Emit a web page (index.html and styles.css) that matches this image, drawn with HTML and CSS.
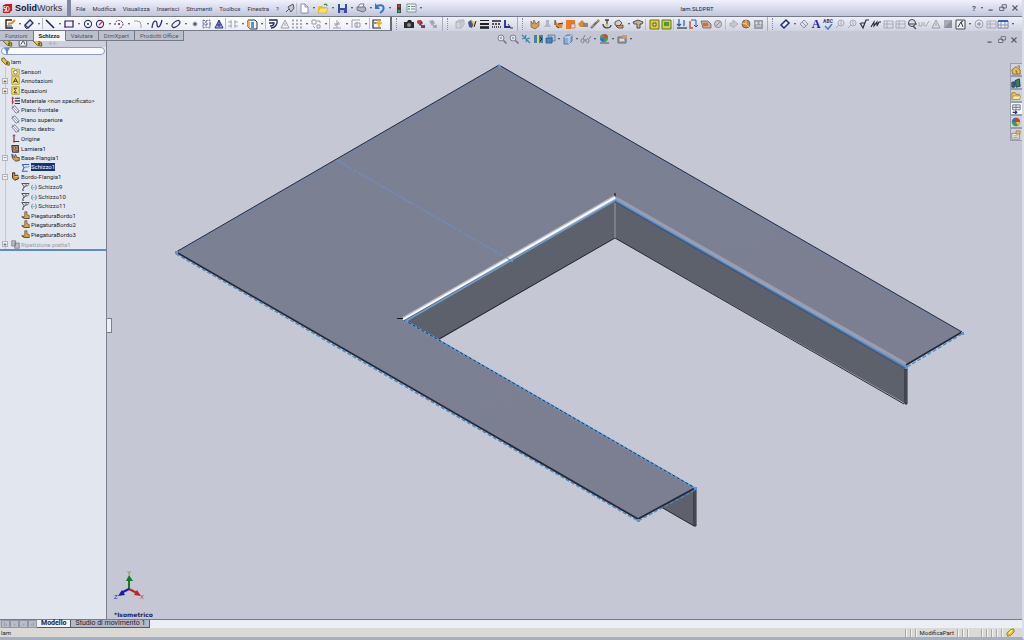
FILE: index.html
```
<!DOCTYPE html>
<html lang="it">
<head>
    <meta charset="UTF-8">
    <meta name="viewport" content="width=device-width, initial-scale=1.0">
    <title>lam.SLDPRT - SolidWorks</title>
    <link rel="stylesheet" href="styles.css">
</head>
<body>

    <!-- Icon sprite -->
    <svg class="sprite" aria-hidden="true">
        <symbol id="i-sketch" viewBox="0 0 12 12"><path d="M8 2H2v8h7" fill="none" stroke="#223" stroke-width="1.4"/><path d="M4 6l4-1 3-3" fill="none" stroke="#e0921c" stroke-width="2"/><path d="M3 8h5" stroke="#24a" /></symbol>
        <symbol id="i-dim" viewBox="0 0 12 12"><path d="M2 7l5-5 3 3-5 5z" fill="#dfe4f5" stroke="#23306e" stroke-width="1.3"/><path d="M2 7v2l2 2" stroke="#23306e" fill="none"/></symbol>
        <symbol id="i-line" viewBox="0 0 12 12"><path d="M2 2l8 8" stroke="#191a78" stroke-width="1.6"/></symbol>
        <symbol id="i-rect" viewBox="0 0 12 12"><path d="M2 3h8v6H2z" fill="#f4f5fc" stroke="#191a78" stroke-width="1.2"/><path d="M1 9h2M9 3h2" stroke="#b33"/></symbol>
        <symbol id="i-circle" viewBox="0 0 12 12"><circle cx="6" cy="6" r="3.6" fill="none" stroke="#2b2f86" stroke-width="1.1"/><path d="M6 5v2M5 6h2" stroke="#2b2f86"/></symbol>
        <symbol id="i-circle2" viewBox="0 0 12 12"><circle cx="6" cy="6" r="3.6" fill="none" stroke="#2b2f86" stroke-width="1.1"/><path d="M5 7l4-4" stroke="#c33" stroke-width="1.2"/></symbol>
        <symbol id="i-arc3" viewBox="0 0 12 12"><path d="M2 7a4 4 0 0 1 8-1a4 4 0 0 1-4 4" fill="none" stroke="#2b2f86" stroke-dasharray="2 1"/><path d="M5 5h2v2H5z" fill="#b44"/></symbol>
        <symbol id="i-fillet" viewBox="0 0 12 12"><path d="M2 3h3a4 4 0 0 1 4 4v3" fill="none" stroke="#9a9eae"/></symbol>
        <symbol id="i-spline" viewBox="0 0 12 12"><path d="M1 10C2 1 6 2 6 6s3 5 5-4" fill="none" stroke="#2a2f90" stroke-width="1.3"/></symbol>
        <symbol id="i-ellipse" viewBox="0 0 12 12"><ellipse cx="6" cy="6" rx="4.6" ry="2.4" transform="rotate(-38 6 6)" fill="none" stroke="#34386f" stroke-width="1.2"/></symbol>
        <symbol id="i-point" viewBox="0 0 12 12"><path d="M6 3.500v5M3.500 6h5M4.500 4.500l3 3M7.500 4.500l-3 3" stroke="#34386f" stroke-width=".8"/></symbol>
        <symbol id="i-plane" viewBox="0 0 12 12"><path d="M2 2l3 1 4-1v8l-4-1-3 1zM2 6h8M5 3v6" fill="none" stroke="#566096" stroke-dasharray="2 1"/></symbol>
        <symbol id="i-text" viewBox="0 0 12 12"><path d="M6 2l4 8H2zM4 7h4M6 3v6" fill="#aab0d6" stroke="#2c3384"/></symbol>
        <symbol id="i-trim" viewBox="0 0 12 12"><path d="M1 4h4M7 4h4M1 8h4M7 8h4M4 2v8M8 2v8" stroke="#a6a9b8"/></symbol>
        <symbol id="i-cube" viewBox="0 0 12 12"><path d="M2 2h7l2 2v7H4L2 9z" fill="#eef2fb" stroke="#2c3250"/><path d="M2 2l2 2v7L2 9z" fill="#e9b648"/><path d="M5 4h3v6H5z" fill="#5c92d6"/></symbol>
        <symbol id="i-offset" viewBox="0 0 12 12"><path d="M2 2h8c1 4-2 8-6 8M2 5h5c0 2-2 3-4 3" fill="none" stroke="#22275e" stroke-width="1.3"/></symbol>
        <symbol id="i-warn" viewBox="0 0 12 12"><path d="M6 2l4 8H2zM6 5v3" fill="none" stroke="#9c9ea8"/></symbol>
        <symbol id="i-grid" viewBox="0 0 12 12"><path d="M1 2.500h10M1 6h10M1 9.500h10" stroke="#a9abb5" stroke-width="2" stroke-dasharray="2 2"/></symbol>
        <symbol id="i-move" viewBox="0 0 12 12"><path d="M2 2h4v4H2zM7 7h3v3H7zM3 8l2 2M7 3h3v2" fill="none" stroke="#9699a6"/></symbol>
        <symbol id="i-rel" viewBox="0 0 12 12"><path d="M2 10h8M6 2v8M3 6h6M4 8l4-4" fill="none" stroke="#9b9dab"/></symbol>
        <symbol id="i-repair" viewBox="0 0 12 12"><path d="M2 10V2h8M5 5h5v4H5zM7 4v6" fill="none" stroke="#9b9dab"/></symbol>
        <symbol id="i-rapid" viewBox="0 0 12 12"><path d="M10 2H2v8h8M3 5h5" fill="none" stroke="#23284e" stroke-width="1.2"/><path d="M8 2l1 2 2 1-2 1-1 3-1-3-2-1 2-1z" fill="#f2b417" stroke="#f2b417"/></symbol>
        <symbol id="i-camera" viewBox="0 0 12 12"><path d="M1 4h3l1-2h3l1 2h2v6H1z" fill="#2b2b2e"/><circle cx="6" cy="7" r="2" fill="#8b8e96"/></symbol>
        <symbol id="i-rec" viewBox="0 0 12 12"><path d="M2 3l4-1 2 3-3 3zM6 7h4v3H6z" fill="#4b4c56"/><circle cx="4" cy="4" r="2" fill="#d43a34"/><path d="M6 9l4-2" stroke="#d43a34"/></symbol>
        <symbol id="i-stop" viewBox="0 0 12 12"><path d="M2 3l4-1 2 3-3 3zM6 7h4v3H6z" fill="#a6a7b0"/></symbol>
        <symbol id="i-box" viewBox="0 0 12 12"><path d="M2 4l3-2h5v5l-3 3H2zM2 4h5v6M7 4l3-2" fill="#d0d2da" stroke="#b0b2bd"/></symbol>
        <symbol id="i-paint" viewBox="0 0 12 12"><path d="M2 4l3-2 3 3-2 5-3-1z" fill="#4c567e"/><path d="M5 3l5 1-2 4z" fill="#e8c245"/><path d="M8 9l2-6" stroke="#222"/></symbol>
        <symbol id="i-lines" viewBox="0 0 12 12"><path d="M2 2.500h9" stroke="#222"/><path d="M2 6h9" stroke="#222" stroke-width="2"/><path d="M2 9.500h9" stroke="#222" stroke-width="2.600"/></symbol>
        <symbol id="i-dash" viewBox="0 0 12 12"><path d="M2 3h9" stroke="#222" stroke-width="1.500"/><path d="M2 6h9" stroke="#222" stroke-width="1.500" stroke-dasharray="2 1"/><path d="M2 9h9" stroke="#222" stroke-width="1.500" stroke-dasharray="1 1"/></symbol>
        <symbol id="i-ell" viewBox="0 0 12 12"><path d="M3 2v7h5" fill="none" stroke="#1d2da0" stroke-width="1.800"/><path d="M6 6l3 4M8 10h3" stroke="#444"/></symbol>
        <symbol id="i-sheet" viewBox="0 0 12 12"><path d="M2 3l2 3 1-4 2 4 3-3v5l-4 3-4-2z" fill="#d4a04e" stroke="#6d5c50" stroke-width=".7"/></symbol>
        <symbol id="i-pawn" viewBox="0 0 12 12"><path d="M5 2h3v4l2 3H3l2-3z" fill="#b3b5c0"/></symbol>
        <symbol id="i-bend" viewBox="0 0 12 12"><path d="M2 2l3 4 5-1-1 5H5L2 7z" fill="#e28a2b"/><path d="M2 2v5M5 6l5-1M3 8l3 2" stroke="#443c3c"/></symbol>
        <symbol id="i-tab" viewBox="0 0 12 12"><path d="M1 2h9v4H6v5H1z" fill="#ec7c22"/><path d="M6 6h4v4H6z" fill="#ddd" stroke="#a55" stroke-width=".6"/></symbol>
        <symbol id="i-hem" viewBox="0 0 12 12"><path d="M1 6l4-4 3 3v4L3 9z" fill="#e28a2b"/><path d="M6 5h5v4H6z" fill="#8c8486"/></symbol>
        <symbol id="i-jog" viewBox="0 0 12 12"><path d="M2 10l3-3 2-2 3-3" stroke="#6d6a6e" stroke-width="2.400"/><path d="M2 9l3-2M7 4l3-2" stroke="#e6a64a"/></symbol>
        <symbol id="i-lofted" viewBox="0 0 12 12"><path d="M4 2h4M6 2v4M2 6c0 5 8 5 8 1" fill="none" stroke="#3f4048" stroke-width="1.300"/><circle cx="6" cy="7" r="1.500" fill="#e7b84c"/></symbol>
        <symbol id="i-corner" viewBox="0 0 12 12"><path d="M2 4l4-2 3 3-3 3-4-1z" fill="#d8d0bc" stroke="#4d4a50" stroke-width=".9"/><path d="M3 8l7-1v3H5z" fill="#e0a050" stroke="#4d4a50" stroke-width=".9"/></symbol>
        <symbol id="i-unfold" viewBox="0 0 12 12"><path d="M1 4l5-2 5 2-1 2H8v4H5V6H2z" fill="#c8b48a" stroke="#44424a" stroke-width=".9"/></symbol>
        <symbol id="i-yellow" viewBox="0 0 12 12"><path d="M2 2h9v9H2z" fill="#d8cd3d" stroke="#77701e"/><path d="M5 5h3v3H5z" fill="#f6f2a0" stroke="#4b6120"/></symbol>
        <symbol id="i-green" viewBox="0 0 12 12"><path d="M2 2h9v9H2z" fill="#d0cf3f" stroke="#66751e"/><path d="M4 4h5v4H4z" fill="#4c983c"/></symbol>
        <symbol id="i-down" viewBox="0 0 12 12"><path d="M3 1v7M1 6l2 2 2-2M8 2v6" stroke="#2b56b4" fill="none" stroke-width="1.200"/><path d="M1 10h10" stroke="#555" stroke-width="1.500"/></symbol>
        <symbol id="i-up" viewBox="0 0 12 12"><path d="M3 2h5v7M6 7l2 2 2-2" stroke="#2b56b4" fill="none"/><path d="M2 3v7h3" stroke="#c4583c" stroke-width="1.500" fill="none"/></symbol>
        <symbol id="i-fold" viewBox="0 0 12 12"><path d="M1 3h7l3 3v4H3z" fill="#c8ac92" stroke="#77625a" stroke-width=".8"/><path d="M3 5h5v3H3z" fill="#dd6a2b"/></symbol>
        <symbol id="i-no" viewBox="0 0 12 12"><circle cx="6" cy="6" r="3.600" fill="#c9cad0" stroke="#8e909a"/><path d="M3 9l6-6" stroke="#8e909a"/></symbol>
        <symbol id="i-flat" viewBox="0 0 12 12"><path d="M2 5h3V2l5 4-5 4V8H2z" fill="#c6c8d1" stroke="#aeb0bb"/></symbol>
        <symbol id="i-globe" viewBox="0 0 12 12"><circle cx="6" cy="6" r="4" fill="#cf8550" stroke="#555" stroke-width=".8"/><path d="M6 2v4l3 3M2 5l4 1" stroke="#f3cf6b" fill="none"/></symbol>
        <symbol id="i-panel" viewBox="0 0 12 12"><path d="M2 2h9v9H2z" fill="#9c9ea6"/><path d="M4 4h1v2H4zM8 4h1v2H8zM4 8h5" fill="#dcdde2" stroke="#dcdde2"/></symbol>
        <symbol id="i-dimblue" viewBox="0 0 12 12"><path d="M2 7l5-5 3 3-5 5z" fill="#eef" stroke="#1d2a84" stroke-width="1.500"/></symbol>
        <symbol id="i-dimgrey" viewBox="0 0 12 12"><path d="M2 6l4-4 4 4-4 4zM4 4l4 4" fill="none" stroke="#9093a3"/></symbol>
        <symbol id="i-balloon" viewBox="0 0 12 12"><circle cx="7" cy="5" r="3" fill="none" stroke="#a7a9b6"/><path d="M2 10l3-3M7 3v4" stroke="#a7a9b6"/></symbol>
        <symbol id="i-surf" viewBox="0 0 12 12"><path d="M2 5l3 5 3-8h3M3 5h4" fill="none" stroke="#27283c" stroke-width="1.200"/></symbol>
        <symbol id="i-weld" viewBox="0 0 12 12"><path d="M1 9l3-5v4l3-4v4l2-4h2" fill="none" stroke="#27283c" stroke-width="1.100"/></symbol>
        <symbol id="i-tol" viewBox="0 0 12 12"><path d="M2 3h9v7H2zM5 3v7M2 6h9" fill="none" stroke="#a3a5b1" stroke-width=".9"/></symbol>
        <symbol id="i-zoomtxt" viewBox="0 0 12 12"><circle cx="6" cy="5" r="3.500" fill="#dcdde6" stroke="#44464f"/><path d="M2 6h9M7 8l3 3" stroke="#44464f" stroke-width="1.200"/></symbol>
        <symbol id="i-cosm" viewBox="0 0 12 12"><path d="M1 4v4h3V4M6 8V4M7 8h1l3-5" fill="none" stroke="#a7a9b6"/></symbol>
        <symbol id="i-hatch" viewBox="0 0 12 12"><path d="M2 2h8v8H2z" fill="#8d8f9a"/><path d="M2 2h8L2 10z" fill="#a9abb6"/></symbol>
        <symbol id="i-block" viewBox="0 0 12 12"><path d="M2 2h9v9H2z" fill="#f0f1f6" stroke="#43454f"/><path d="M4 9l3-5 2 5M7 4l2-1" fill="none" stroke="#333"/></symbol>
        <symbol id="i-target" viewBox="0 0 12 12"><circle cx="6" cy="6" r="4" fill="none" stroke="#a3a5b1"/><path d="M6 4v4M4 6h4" stroke="#888b99"/></symbol>
        <symbol id="i-table" viewBox="0 0 12 12"><path d="M1 3h10v7H1z" fill="#eef1fa" stroke="#5a6a94" stroke-width=".8"/><path d="M1 3h10" stroke="#3c62ae" stroke-width="2"/><path d="M4 4v6M8 4v6M1 7h10" stroke="#8793b4"/></symbol>
        <symbol id="i-pin" viewBox="0 0 12 12"><path d="M2 10l3-3M4 5l5-3 1 4-3 4z" fill="#c3c6d2" stroke="#555868"/></symbol>
        <symbol id="i-new" viewBox="0 0 12 12"><path d="M3 2h4l3 3v6H3z" fill="#fff" stroke="#8d92a8"/><path d="M7 2v3h3" fill="none" stroke="#8d92a8"/></symbol>
        <symbol id="i-open" viewBox="0 0 12 12"><path d="M1 4h4l1 1h4v6H1z" fill="#e9c440"/><path d="M3 6h8l-2 5H1z" fill="#f6e27a" stroke="#b89a30" stroke-width=".5"/><path d="M7 3c2-2 3 0 3 1" stroke="#3a9c3a" fill="none" stroke-width="1.300"/></symbol>
        <symbol id="i-save" viewBox="0 0 12 12"><path d="M2 2h9v9H2z" fill="#35509c"/><path d="M4 2h5v4H4z" fill="#dfe7f7"/><path d="M4 8h4v3H4z" fill="#a9b8dc"/></symbol>
        <symbol id="i-print" viewBox="0 0 12 12"><path d="M3 5l2-3h4L8 5" fill="#fff" stroke="#777b8c"/><path d="M2 5h8l1 3-3 2-6-2z" fill="#b1b5c3" stroke="#6f7384"/></symbol>
        <symbol id="i-undo" viewBox="0 0 12 12"><path d="M3 4c7-3 9 3 3 7" fill="none" stroke="#3277bd" stroke-width="2"/><path d="M1 1v6h5z" fill="#3277bd"/></symbol>
        <symbol id="i-light" viewBox="0 0 12 12"><path d="M4 2h4v9H4z" fill="#3b3b3b"/><circle cx="6" cy="4" r="1.500" fill="#d33"/><circle cx="6" cy="9" r="1.500" fill="#3a3"/></symbol>
        <symbol id="i-opts" viewBox="0 0 12 12"><path d="M2 2h9v8H2z" fill="#edf3f3" stroke="#82959a"/><path d="M3 4.500h2M3 7h2" stroke="#2a8c3a"/><path d="M6 4.500h4M6 7h4" stroke="#76889a"/></symbol>
        <symbol id="i-mag" viewBox="0 0 12 12"><circle cx="5" cy="5" r="3" fill="#dde4ee" stroke="#7c8190"/><path d="M7.500 7.500l3 3" stroke="#6c7180" stroke-width="1.500"/><path d="M4 5h2" stroke="#6c7180"/></symbol>
        <symbol id="i-prev" viewBox="0 0 12 12"><path d="M2 2l8 8M2 6l3-1 1-3M6 9l1-3 3-1" stroke="#4283ad" fill="none" stroke-width="1.300"/></symbol>
        <symbol id="i-section" viewBox="0 0 12 12"><path d="M2 2h9v8H2z" fill="#4f7e9f"/><path d="M5 2h2v8H5z" fill="#c9d78b"/><path d="M8 4l2 2-2 2" stroke="#223" fill="none"/></symbol>
        <symbol id="i-view" viewBox="0 0 12 12"><path d="M4 2h7v6H8V4H4z" fill="#a9c3de" stroke="#466c92" stroke-width=".7"/><path d="M2 5h6v5H2z" fill="#4c86bb" stroke="#2e5684" stroke-width=".8"/></symbol>
        <symbol id="i-shade" viewBox="0 0 12 12"><path d="M2 4l3-2h5v6l-3 3H2z" fill="#88aede" stroke="#4a6692" stroke-width=".8"/><path d="M7 4l3-2M7 4v7M2 4h5" stroke="#d5e4f7"/></symbol>
        <symbol id="i-glass" viewBox="0 0 12 12"><path d="M1 8c0-3 3-3 3 0s-3 2-3 0M4 7h2M6 8c0-3 3-3 3 0s-3 2-3 0M3 6l2-4M9 6l2-3" fill="none" stroke="#7b8090"/></symbol>
        <symbol id="i-scene" viewBox="0 0 12 12"><circle cx="6" cy="5" r="4" fill="#4a9a60"/><path d="M6 1a4 4 0 0 1 4 4H6z" fill="#d0483c"/><path d="M2 5h4v4a4 4 0 0 1-4-4z" fill="#3c6fc0"/><path d="M2 10h9" stroke="#555"/></symbol>
        <symbol id="i-appear" viewBox="0 0 12 12"><path d="M2 4h8v6H2z" fill="#aaa6a0" stroke="#666870"/><path d="M6 2h5v3H6z" fill="#d69a4a"/><path d="M4 6h4v2H4z" fill="#dde"/></symbol>

        <symbol id="t-part" viewBox="0 0 12 12"><path d="M1 2l3-1 3 4 4 2v4L6 10 1 5z" fill="#e8c33b" stroke="#4e4418"/><circle cx="8" cy="8" r="1.500" fill="#6a5a1c"/></symbol>
        <symbol id="t-sens" viewBox="0 0 12 12"><path d="M1 2h4l1 1h5v8H1z" fill="#f5e078" stroke="#a38d2c"/><circle cx="6" cy="7" r="2.500" fill="#fff" stroke="#555"/></symbol>
        <symbol id="t-ann" viewBox="0 0 12 12"><path d="M1 1h10v10H1z" fill="#f5df66" stroke="#a38d2c"/><path d="M3 9l3-6 3 6M4 7h4" fill="none" stroke="#333" stroke-width="1.200"/></symbol>
        <symbol id="t-eq" viewBox="0 0 12 12"><path d="M1 1h10v10H1z" fill="#f5df66" stroke="#a38d2c"/><path d="M8 3H4l2 3-2 3h4" fill="none" stroke="#333" stroke-width="1.200"/></symbol>
        <symbol id="t-mat" viewBox="0 0 12 12"><path d="M2 1v10M4 3h-3M4 8h-3" stroke="#c33" stroke-width="1.500"/><path d="M5 3h7M5 6.500h7M5 10h7" stroke="#334" stroke-width="1.500"/></symbol>
        <symbol id="t-plane" viewBox="0 0 12 12"><path d="M1 4l4-3 6 7-4 3z" fill="#eef" stroke="#555a70"/><path d="M1 1l10 10" stroke="#555a70" stroke-width=".7"/></symbol>
        <symbol id="t-orig" viewBox="0 0 12 12"><path d="M4 1v9h7" fill="none" stroke="#7a2444" stroke-width="1.500"/><circle cx="4" cy="10" r="1.500" fill="#c33"/><path d="M2 3l2-2 2 2" fill="none" stroke="#446"/></symbol>
        <symbol id="t-lam" viewBox="0 0 12 12"><path d="M1 2h9v9H2z" fill="#a98f7a" stroke="#3c3435" stroke-width="1.300"/><path d="M3 4h3v3H3zM7 6l3-3M6 9h4" fill="#e7d090" stroke="#7d3d2e"/></symbol>
        <symbol id="t-base" viewBox="0 0 12 12"><path d="M1 2l3 4 2-4 2 4 3 0v4l-5 1-4-4z" fill="#dda243" stroke="#3c3435"/><path d="M1 2l2 0 3 5" fill="none" stroke="#4b66a4"/></symbol>
        <symbol id="t-edge" viewBox="0 0 12 12"><path d="M2 1h3v4l4-1 1 5-5 2-3-3z" fill="#d58d38" stroke="#30292b" stroke-width="1.200"/><path d="M5 6h5" stroke="#f4dc74"/></symbol>
        <symbol id="t-skb" viewBox="0 0 12 12"><path d="M11 2H2l2 4-2 5h7" fill="none" stroke="#2c66d8" stroke-width="1.400"/><path d="M4 7c3-4 4 1 7-3" fill="none" stroke="#2c66d8"/></symbol>
        <symbol id="t-sk" viewBox="0 0 12 12"><path d="M11 2H1l3 4-2 5h2" fill="none" stroke="#44464e" stroke-width="1.200"/><path d="M4 8c1-4 4-1 7-5M5 4h3" fill="none" stroke="#44464e"/></symbol>
        <symbol id="t-bend" viewBox="0 0 12 12"><path d="M5 1h3v4l3 1v4H4L1 8l4-1z" fill="#dda243" stroke="#4f3d2d" stroke-width=".8"/><path d="M1 7l4 3h6" fill="none" stroke="#4f4f58" stroke-width="1.200"/></symbol>
        <symbol id="t-flat" viewBox="0 0 12 12"><path d="M1 1h5v7H1zM5 4h6v7H5z" fill="#b9bcc4" stroke="#757983"/></symbol>

        <symbol id="p-home" viewBox="0 0 12 12"><path d="M1 6l5-4 5 4v5H2z" fill="#e5bf55" stroke="#7a643a"/><path d="M8 1h2v3M5 7h2v4" fill="none" stroke="#a0522d"/></symbol>
        <symbol id="p-lib" viewBox="0 0 12 12"><path d="M1 5h3v6H1zM5 3l5-2 1 9-5 1z" fill="#35805a" stroke="#22344c"/><path d="M4 4v7" stroke="#314f94" stroke-width="2"/></symbol>
        <symbol id="p-folder" viewBox="0 0 12 12"><path d="M1 2h4l1 2h4v6H1z" fill="#e2c250" stroke="#9c8436"/><path d="M3 6h9l-2 4H1z" fill="#f9eea6" stroke="#9c8436" stroke-width=".7"/></symbol>
        <symbol id="p-view" viewBox="0 0 12 12"><path d="M2 1h9v6H2z" fill="#eee" stroke="#666a78"/><path d="M2 4h9M6 1v6" stroke="#666a78"/><path d="M2 10h5M5 8l2 2-2 2" stroke="#1c2c9c" stroke-width="1.300" fill="none"/></symbol>
        <symbol id="p-ball" viewBox="0 0 12 12"><circle cx="6" cy="6" r="5" fill="#3f9c4a"/><path d="M6 6V1a5 5 0 0 0-5 5z" fill="#3a6ac4"/><path d="M6 6h5a5 5 0 0 1-3 4z" fill="#e8c33b"/><path d="M6 6V1a5 5 0 0 1 5 5z" fill="#cf3f38"/></symbol>
        <symbol id="p-prop" viewBox="0 0 12 12"><path d="M1 4h9v7H1z" fill="#eceae4" stroke="#83807a"/><path d="M6 1h5v4H6z" fill="#e0b75c" stroke="#8d7440" stroke-width=".7"/><path d="M3 7h5M3 9h5" stroke="#999"/></symbol>
    </svg>

    <div class="app">

        <!-- Title bar -->
        <header class="titlebar">
            <div class="brand">
                <svg class="logo" viewBox="0 0 12 12" aria-hidden="true"><path d="M1 3l3-2h7v7l-3 3H1z" fill="#c3241f"/><path d="M1 3h7v8M8 3l3-2" fill="none" stroke="#8a1410" stroke-width=".6"/><path d="M4 4H2v2h2v3H2M5 4v5h2c1-1 1-4 0-5z" fill="none" stroke="#fff" stroke-width=".9"/></svg>
                <span class="brand-name"><b>Solid</b>Works</span>
            </div>
            <nav class="menu">
                <a href="#">File</a>
                <a href="#">Modifica</a>
                <a href="#">Visualizza</a>
                <a href="#">Inserisci</a>
                <a href="#">Strumenti</a>
                <a href="#">Toolbox</a>
                <a href="#">Finestra</a>
                <a href="#">?</a>
            </nav>
            <div class="quick">
                <button class="tb" aria-label="Blocca menu"><svg><use href="#i-pin"/></svg></button>
                <i class="sep"></i>
                <button class="tb" aria-label="Nuovo"><svg><use href="#i-new"/></svg></button><button class="dd" aria-label="Altro"></button>
                <button class="tb" aria-label="Apri"><svg><use href="#i-open"/></svg></button><button class="dd" aria-label="Altro"></button>
                <button class="tb" aria-label="Salva"><svg><use href="#i-save"/></svg></button><button class="dd" aria-label="Altro"></button>
                <button class="tb" aria-label="Stampa"><svg><use href="#i-print"/></svg></button><button class="dd" aria-label="Altro"></button>
                <button class="tb" aria-label="Annulla"><svg><use href="#i-undo"/></svg></button><button class="dd" aria-label="Altro"></button>
                <button class="tb" aria-label="Ricostruisci"><svg><use href="#i-light"/></svg></button>
                <button class="tb" aria-label="Opzioni"><svg><use href="#i-opts"/></svg></button><button class="dd" aria-label="Altro"></button>
            </div>
            <h1 class="doc-title">lam.SLDPRT</h1>
            <div class="win-buttons">
                <button class="help" aria-label="Guida">?</button><button class="dd" aria-label="Altro"></button>
                <button class="wb" aria-label="Riduci"><svg viewBox="0 0 12 12"><path d="M3 8.500h5" stroke="#555968" stroke-width="1.500"/></svg></button>
                <button class="wb" aria-label="Ripristina"><svg viewBox="0 0 12 12"><path d="M5 2h5v4H5zM2 5h5v4H2z" fill="#d9dbe8" stroke="#555968"/></svg></button>
                <button class="wb" aria-label="Chiudi"><svg viewBox="0 0 12 12"><path d="M3 3l6 6M9 3l-6 6" stroke="#555968" stroke-width="1.300"/></svg></button>
            </div>
        </header>

        <!-- Toolbars -->
        <div class="toolbars">
            <div class="toolbar sketch-bar">
                <button class="tb" aria-label="Schizzo"><svg><use href="#i-sketch"/></svg></button><button class="dd" aria-label="Altro"></button>
                <button class="tb" aria-label="Quota"><svg><use href="#i-dim"/></svg></button><button class="dd" aria-label="Altro"></button>
                <i class="sep"></i>
                <button class="tb" aria-label="Linea"><svg><use href="#i-line"/></svg></button><button class="dd" aria-label="Altro"></button>
                <button class="tb" aria-label="Rettangolo"><svg><use href="#i-rect"/></svg></button><button class="dd" aria-label="Altro"></button>
                <button class="tb" aria-label="Cerchio"><svg><use href="#i-circle"/></svg></button>
                <button class="tb" aria-label="Arco centro"><svg><use href="#i-circle2"/></svg></button><button class="dd" aria-label="Altro"></button>
                <button class="tb" aria-label="Arco 3 punti"><svg><use href="#i-arc3"/></svg></button><button class="dd" aria-label="Altro"></button>
                <button class="tb" aria-label="Raccordo"><svg><use href="#i-fillet"/></svg></button><button class="dd" aria-label="Altro"></button>
                <button class="tb" aria-label="Spline"><svg><use href="#i-spline"/></svg></button><button class="dd" aria-label="Altro"></button>
                <button class="tb" aria-label="Ellisse"><svg><use href="#i-ellipse"/></svg></button><button class="dd" aria-label="Altro"></button>
                <button class="tb" aria-label="Punto"><svg><use href="#i-point"/></svg></button>
                <button class="tb" aria-label="Piano"><svg><use href="#i-plane"/></svg></button>
                <button class="tb" aria-label="Testo"><svg><use href="#i-text"/></svg></button>
                <i class="sep"></i>
                <button class="tb" aria-label="Accorcia"><svg><use href="#i-trim"/></svg></button><button class="dd" aria-label="Altro"></button>
                <button class="tb" aria-label="Converti"><svg><use href="#i-cube"/></svg></button><button class="dd" aria-label="Altro"></button>
                <i class="sep"></i>
                <button class="tb" aria-label="Offset"><svg><use href="#i-offset"/></svg></button>
                <button class="tb" aria-label="Specchia"><svg><use href="#i-warn"/></svg></button>
                <button class="tb" aria-label="Ripetizione"><svg><use href="#i-grid"/></svg></button><button class="dd" aria-label="Altro"></button>
                <button class="tb" aria-label="Sposta"><svg><use href="#i-move"/></svg></button><button class="dd" aria-label="Altro"></button>
                <i class="sep"></i>
                <button class="tb" aria-label="Relazioni"><svg><use href="#i-rel"/></svg></button><button class="dd" aria-label="Altro"></button>
                <button class="tb" aria-label="Ripara"><svg><use href="#i-repair"/></svg></button><button class="dd" aria-label="Altro"></button>
                <i class="sep"></i>
                <button class="tb" aria-label="Schizzo rapido"><svg><use href="#i-rapid"/></svg></button>
            </div>
            <div class="toolbar">
                <i class="grip"></i>
                <button class="tb" aria-label="Cattura"><svg><use href="#i-camera"/></svg></button>
                <button class="tb" aria-label="Registra"><svg><use href="#i-rec"/></svg></button>
                <button class="tb" aria-label="Arresta"><svg><use href="#i-stop"/></svg></button>
            </div>
            <div class="toolbar">
                <i class="grip"></i>
                <button class="tb" aria-label="Livello"><svg><use href="#i-box"/></svg></button>
                <button class="tb" aria-label="Colore linea"><svg><use href="#i-paint"/></svg></button>
                <button class="tb" aria-label="Spessore linea"><svg><use href="#i-lines"/></svg></button>
                <button class="tb" aria-label="Stile linea"><svg><use href="#i-dash"/></svg></button>
                <button class="tb" aria-label="Bordi nascosti"><svg><use href="#i-ell"/></svg></button>
            </div>
            <div class="toolbar sheet-bar">
                <i class="grip"></i>
                <button class="tb" aria-label="Flangia base"><svg><use href="#i-sheet"/></svg></button>
                <button class="tb" aria-label="Converti in lamiera"><svg><use href="#i-pawn"/></svg></button>
                <button class="tb" aria-label="Flangia bordo"><svg><use href="#i-bend"/></svg></button>
                <button class="tb" aria-label="Flangia obliqua"><svg><use href="#i-tab"/></svg></button>
                <button class="tb" aria-label="Orlo"><svg><use href="#i-hem"/></svg></button>
                <button class="tb" aria-label="Piega schizzata"><svg><use href="#i-jog"/></svg></button>
                <button class="tb" aria-label="Piega di loft"><svg><use href="#i-lofted"/></svg></button>
                <button class="tb" aria-label="Angoli"><svg><use href="#i-corner"/></svg></button><button class="dd" aria-label="Altro"></button>
                <button class="tb" aria-label="Strumento forma"><svg><use href="#i-unfold"/></svg></button>
                <i class="sep"></i>
                <button class="tb" aria-label="Taglio estruso"><svg><use href="#i-yellow"/></svg></button>
                <button class="tb" aria-label="Foro semplice"><svg><use href="#i-green"/></svg></button>
                <i class="sep"></i>
                <button class="tb" aria-label="Distendi"><svg><use href="#i-down"/></svg></button>
                <button class="tb" aria-label="Piega"><svg><use href="#i-up"/></svg></button>
                <button class="tb" aria-label="Appiattisci"><svg><use href="#i-fold"/></svg></button>
                <button class="tb" aria-label="Nessuna piega"><svg><use href="#i-no"/></svg></button>
                <i class="sep"></i>
                <button class="tb" aria-label="Inserisci pieghe"><svg><use href="#i-flat"/></svg></button>
                <button class="tb" aria-label="Strappo"><svg><use href="#i-globe"/></svg></button>
                <button class="tb" aria-label="Pannello"><svg><use href="#i-panel"/></svg></button>
            </div>
            <div class="toolbar note-bar">
                <i class="grip"></i>
                <button class="tb" aria-label="Quota intelligente"><svg><use href="#i-dimblue"/></svg></button><button class="dd" aria-label="Altro"></button>
                <button class="tb" aria-label="Elementi modello"><svg><use href="#i-dimgrey"/></svg></button>
                <button class="tb letter" aria-label="Nota">A</button>
                <button class="tb abc" aria-label="Controllo ortografico">ABC<svg viewBox="0 0 12 6"><path d="M3 2l3 3 4-5" fill="none" stroke="#4a78cc" stroke-width="1.500"/></svg></button>
                <button class="tb" aria-label="Bollatura"><svg><use href="#i-balloon"/></svg></button>
                <button class="tb" aria-label="Bollatura automatica"><svg><use href="#i-balloon"/></svg></button>
                <button class="tb" aria-label="Finitura"><svg><use href="#i-surf"/></svg></button>
                <button class="tb" aria-label="Saldatura"><svg><use href="#i-weld"/></svg></button>
                <button class="tb" aria-label="Tolleranza"><svg><use href="#i-tol"/></svg></button>
                <button class="tb" aria-label="Riferimento"><svg><use href="#i-tol"/></svg></button>
                <button class="tb" aria-label="Riferimento parziale"><svg><use href="#i-zoomtxt"/></svg></button>
                <button class="tb" aria-label="Foro"><svg><use href="#i-cosm"/></svg></button>
                <button class="tb" aria-label="Revisione"><svg><use href="#i-warn"/></svg></button>
                <button class="tb" aria-label="Tratteggio"><svg><use href="#i-hatch"/></svg></button>
                <button class="tb" aria-label="Blocco"><svg><use href="#i-block"/></svg></button><button class="dd" aria-label="Altro"></button>
                <button class="tb" aria-label="Centro"><svg><use href="#i-target"/></svg></button>
                <button class="tb" aria-label="Linea di mezzeria"><svg><use href="#i-tol"/></svg></button>
                <button class="tb" aria-label="Tabelle"><svg><use href="#i-table"/></svg></button><button class="dd" aria-label="Altro"></button>
            </div>
        </div>

        <!-- CommandManager tabs -->
        <div class="tabs">
            <button>Funzioni</button>
            <button class="active">Schizzo</button>
            <button>Valutare</button>
            <button>DimXpert</button>
            <button>Prodotti Office</button>
        </div>

        <main class="workspace">
            <aside class="sidebar">
                <div class="panel-tabs">
                    <button aria-label="Albero"><svg><use href="#t-part"/></svg></button>
                    <button aria-label="Proprietà"><svg><use href="#i-block"/></svg></button>
                    <button aria-label="Configurazioni"><svg><use href="#t-part"/></svg></button>
                    <button aria-label="DimXpert"><svg><use href="#i-trim"/></svg></button>
                </div>
                <div class="filter">
                    <svg viewBox="0 0 12 12" aria-hidden="true"><path d="M1 1h10L7 6v5H5V6z" fill="#4a8fd4" stroke="#2d64a8"/></svg>
                    <input type="text" aria-label="Filtro">
                </div>
                <ul class="tree">
                    <li class="root"><svg><use href="#t-part"/></svg>lam</li>
                    <li><svg><use href="#t-sens"/></svg>Sensori</li>
                    <li><button class="exp" aria-label="Espandi">+</button><svg><use href="#t-ann"/></svg>Annotazioni</li>
                    <li><button class="exp" aria-label="Espandi">+</button><svg><use href="#t-eq"/></svg>Equazioni</li>
                    <li><svg><use href="#t-mat"/></svg>Materiale &lt;non specificato&gt;</li>
                    <li><svg><use href="#t-plane"/></svg>Piano frontale</li>
                    <li><svg><use href="#t-plane"/></svg>Piano superiore</li>
                    <li><svg><use href="#t-plane"/></svg>Piano destro</li>
                    <li><svg><use href="#t-orig"/></svg>Origine</li>
                    <li><svg><use href="#t-lam"/></svg>Lamiera1</li>
                    <li><button class="exp" aria-label="Comprimi">−</button><svg><use href="#t-base"/></svg>Base-Flangia1</li>
                    <li class="child"><svg><use href="#t-skb"/></svg><span class="selected">Schizzo1</span></li>
                    <li><button class="exp" aria-label="Comprimi">−</button><svg><use href="#t-edge"/></svg>Bordo-Flangia1</li>
                    <li class="child"><svg><use href="#t-sk"/></svg>(-) Schizzo9</li>
                    <li class="child"><svg><use href="#t-sk"/></svg>(-) Schizzo10</li>
                    <li class="child"><svg><use href="#t-sk"/></svg>(-) Schizzo11</li>
                    <li class="child"><svg><use href="#t-bend"/></svg>PiegaturaBordo1</li>
                    <li class="child"><svg><use href="#t-bend"/></svg>PiegaturaBordo2</li>
                    <li class="child"><svg><use href="#t-bend"/></svg>PiegaturaBordo3</li>
                    <li class="off"><button class="exp" aria-label="Espandi">+</button><svg><use href="#t-flat"/></svg>Ripetizione piatta1</li>
                </ul>
            </aside>

            <section class="viewport">
                <svg class="model" viewBox="107 41 915 578" preserveAspectRatio="xMidYMid meet" role="img" aria-label="Modello lamiera">
                    <defs>
                        <linearGradient id="plate" x1="0" y1="0" x2="1" y2="1">
                            <stop offset="0" stop-color="#7b8093"/>
                            <stop offset="1" stop-color="#7c7f91"/>
                        </linearGradient>
                    </defs>
                    <!-- flange walls -->
                    <path d="M404 320L615 200V238L439 340Z" fill="#5c616c"/>
                    <path d="M615 200L906 367V404L615 238Z" fill="#5c616c"/>
                    <path d="M661 507L694 488V526Z" fill="#5c616c"/>
                    <path d="M439 339L615 238L904 404" fill="none" stroke="#26272f"/>
                    <path d="M615 203V238" stroke="#9a9ca6"/>
                    <path d="M905 369h2v35h-2z" fill="#666a76" stroke="#25262e"/>
                    <path d="M694 489h2v37h-2z" fill="#666a76" stroke="#25262e"/>
                    <path d="M661 507l33 19" stroke="#25262e"/>
                    <!-- top face -->
                    <path d="M499 65L962 332L906 366L615 197L402 319L695 488L638 520L176 252Z" fill="url(#plate)"/>
                    <path d="M176 252L499 65L962 332" fill="none" stroke="#262a38"/>
                    <path d="M180 252L499 67L958 332" fill="none" stroke="#5f86c4" stroke-dasharray="4 2" stroke-width=".8"/>
                    <path d="M176 254L638 521L695 490M962 334L907 367" fill="none" stroke="#4a8cc8" stroke-width="1.300" stroke-dasharray="4 2"/>
                    <path d="M176 252L638 519L695 488M962 332L906 365" fill="none" stroke="#262a38" stroke-width="1.800"/>
                    <path d="M404 320L695 488" fill="none" stroke="#5aa2e0" stroke-width="1.600"/>
                    <path d="M404 320L695 488" fill="none" stroke="#1f3350" stroke-dasharray="3 2"/>
                    <!-- bends -->
                    <path d="M403 318.500L615 196.500" stroke="#b9bccb" stroke-width="3"/>
                    <path d="M403 319.500L615 197.500" stroke="#fafbff" stroke-width="2"/>
                    <path d="M405 321.500L615 200.500" stroke="#6f9ccb" stroke-width="1.600"/>
                    <path d="M616 198L906 364" stroke="#9c9cac" stroke-width="3"/>
                    <path d="M615 200L906 367" stroke="#4f94d8" stroke-width="1.500"/>
                    <path d="M615 202L904 368.500" stroke="#35527a" stroke-width=".8"/>
                    <!-- sketch line -->
                    <path d="M338 161L512 261" stroke="#6a90d2" stroke-dasharray="16 2 4 2"/>
                    <path d="M397 318.500h6M615 193v3" stroke="#1b1c22" stroke-width="1.200"/>
                    <path d="M175 251h3v3h-3zM498 65h3v3h-3zM337 160h2v2h-2zM961 332h3v3h-3zM905 366h3v3h-3zM694 487h3v3h-3zM637 519h3v3h-3zM511 260h2v2h-2z" fill="#4a98e6"/>
                    <!-- triad -->
                    <path d="M129 589V580" stroke="#157a24" stroke-width="2"/><path d="M126 581l3-6 4 6z" fill="#157a24"/>
                    <path d="M129 589l8 4" stroke="#c02424" stroke-width="2"/><path d="M137 590l4 6-7-1z" fill="#c02424"/>
                    <path d="M129 589l-8 4" stroke="#1c1c9c" stroke-width="2"/><path d="M122 590l-4 6 7-1z" fill="#1c1c9c"/>
                    <text x="127" y="575" class="axis axis-y">Y</text>
                    <text x="140" y="599" class="axis axis-x">X</text>
                    <text x="114" y="599" class="axis axis-z">Z</text>
                </svg>
                <span class="view-name">*Isometrico</span>
                <button class="splitter" aria-label="Comprimi pannello"></button>

                <div class="hud">
                    <button class="tb" aria-label="Zoom adatta"><svg><use href="#i-mag"/></svg></button>
                    <button class="tb" aria-label="Zoom area"><svg><use href="#i-mag"/></svg></button>
                    <button class="tb" aria-label="Vista precedente"><svg><use href="#i-prev"/></svg></button>
                    <button class="tb" aria-label="Sezione"><svg><use href="#i-section"/></svg></button>
                    <button class="tb" aria-label="Orientamento"><svg><use href="#i-view"/></svg></button><button class="dd" aria-label="Altro"></button>
                    <button class="tb" aria-label="Stile vista"><svg><use href="#i-shade"/></svg></button><button class="dd" aria-label="Altro"></button>
                    <button class="tb" aria-label="Nascondi"><svg><use href="#i-glass"/></svg></button><button class="dd" aria-label="Altro"></button>
                    <button class="tb" aria-label="Scena"><svg><use href="#i-scene"/></svg></button><button class="dd" aria-label="Altro"></button>
                    <button class="tb" aria-label="Impostazioni vista"><svg><use href="#i-appear"/></svg></button><button class="dd" aria-label="Altro"></button>
                </div>
                <div class="doc-buttons">
                    <button class="wb" aria-label="Riduci documento"><svg viewBox="0 0 12 12"><path d="M3 8.500h5" stroke="#555968" stroke-width="1.500"/></svg></button>
                    <button class="wb" aria-label="Ripristina documento"><svg viewBox="0 0 12 12"><path d="M5 2h5v4H5zM2 5h5v4H2z" fill="#d9dbe8" stroke="#555968"/></svg></button>
                    <button class="wb" aria-label="Chiudi documento"><svg viewBox="0 0 12 12"><path d="M3 3l6 6M9 3l-6 6" stroke="#555968" stroke-width="1.300"/></svg></button>
                </div>
                <div class="task-pane">
                    <button aria-label="Risorse"><svg><use href="#p-home"/></svg></button>
                    <button aria-label="Libreria"><svg><use href="#p-lib"/></svg></button>
                    <button aria-label="File"><svg><use href="#p-folder"/></svg></button>
                    <button class="active" aria-label="Tavolozza viste"><svg><use href="#p-view"/></svg></button>
                    <button aria-label="Aspetti"><svg><use href="#p-ball"/></svg></button>
                    <button aria-label="Proprietà personalizzate"><svg><use href="#p-prop"/></svg></button>
                </div>
            </section>
        </main>

        <!-- Bottom tabs -->
        <div class="bottom-tabs">
            <div class="scrollers">
                <button aria-label="Primo">|‹</button>
                <button aria-label="Precedente">‹</button>
                <button aria-label="Successivo">›</button>
                <button aria-label="Ultimo">›|</button>
            </div>
            <button class="sheet active">Modello</button>
            <button class="sheet">Studio di movimento 1</button>
        </div>

        <footer class="status">
            <span class="status-text">lam</span>
            <div class="ticks"><i></i><i></i><i></i></div>
            <span class="mode">ModificaPart</span>
            <div class="ticks"><i></i><i></i><i></i></div>
            <div class="ticks last"><i></i><i></i><i></i><i></i><i></i></div>
            <svg class="tag" viewBox="0 0 12 12" aria-hidden="true"><path d="M1 7l5-5 4-1 1 4-5 5-4 1z" fill="#efbf2c" stroke="#8a6b1c"/><path d="M4 7l4-4" stroke="#fdf0a8" stroke-width="1.500"/></svg>
        </footer>
    </div>

</body>
</html>
```

FILE: styles.css
```
/* General Styles */
* {
    box-sizing: border-box;
}

body {
    margin: 0;
    font-family: Roboto, "Liberation Sans", sans-serif;
    font-size: 6px;
    color: #22242c;
    background: #c5c8d4;
}

button {
    font: inherit;
    color: inherit;
    padding: 0;
    border: 0;
    background: none;
    cursor: pointer;
}

svg {
    display: block;
}

.sprite {
    display: none;
}

.app {
    display: flex;
    flex-direction: column;
    height: 100vh;
    border-right: 2px solid #dadde8;
    border-bottom: 3px solid #a5afc2;
}

/* Toolbar buttons */
.tb {
    flex: none;
    width: 12px;
    height: 12px;
}

.tb svg {
    width: 12px;
    height: 12px;
}

.dd {
    flex: none;
    width: 7px;
    height: 12px;
    display: flex;
    align-items: center;
    justify-content: center;
}

.dd::after {
    content: "";
    border: 1px solid transparent;
    border-top: 2px solid #3c3e48;
    border-bottom: 0;
}

.sep {
    flex: none;
    width: 2px;
    height: 11px;
    border-left: 1px solid #b9bccb;
}

.grip {
    flex: none;
    width: 3px;
    height: 12px;
    margin-right: 4px;
    border-left: 1px dotted #8c8fa0;
}

/* Title bar */
.titlebar {
    display: flex;
    align-items: center;
    height: 17px;
    background: linear-gradient(#f0f1fb, #d9dbee 50%, #c2c4d8);
    border-bottom: 1px solid #777a8a;
}

.brand {
    display: flex;
    align-items: center;
    gap: 2px;
    width: 71px;
    height: 16px;
    padding-left: 2px;
    border-right: 4px solid #8386a0;
}

.logo {
    width: 11px;
    height: 11px;
}

.brand-name {
    font-family: "Liberation Sans", sans-serif;
    font-size: 9px;
    color: #33343c;
}

.brand-name b {
    color: #17181c;
}

.menu {
    display: flex;
    gap: 7px;
    padding-left: 5px;
    width: 213px;
}

.menu a {
    color: #34364a;
    text-decoration: none;
}

.quick,
.win-buttons,
.hud,
.doc-buttons {
    display: flex;
    align-items: center;
}

.doc-title {
    flex: 1;
    margin: 0;
    font-size: 6px;
    font-weight: normal;
    text-align: center;
}

.help {
    width: 8px;
    font-size: 8px;
    font-weight: bold;
    color: #555968;
}

.wb {
    width: 12px;
    height: 12px;
}

.wb svg {
    width: 10px;
    height: 10px;
    margin: 1px;
}

.win-buttons {
    padding-right: 1px;
}

/* Toolbars */
.toolbars {
    display: flex;
    height: 14px;
    background: linear-gradient(#eef0f9, #cfd2e0);
}

.toolbar {
    display: flex;
    align-items: center;
    padding-left: 4px;
    padding-right: 3px;
    border-right: 1px solid #a9acbb;
}

.sketch-bar {
    width: 392px;
    background: linear-gradient(#ffffff, #eceef8);
    border-right: 2px solid #666977;
    border-bottom: 1px solid #777a88;
}

.note-bar {
    flex: 1;
    border-right: 0;
}

.sheet-bar .sep {
    width: 3px;
    margin-left: 1px;
}

.letter {
    font: bold 12px/12px "Liberation Serif", serif;
    color: #2420b0;
}

.abc {
    font-size: 5px;
    line-height: 6px;
    font-weight: bold;
    color: #2f3a80;
}

.abc svg {
    height: 6px;
}

/* Command tabs */
.tabs {
    display: flex;
    height: 10px;
}

.tabs button {
    padding: 0 5px;
    color: #55586a;
    background: #bcbfcc;
    border-right: 1px solid #777a89;
    border-bottom: 1px solid #777a89;
}

.tabs .active {
    color: #1c1d24;
    background: #f4f5fa;
    border-bottom-color: #f4f5fa;
    font-weight: bold;
}

/* Workspace */
.workspace {
    flex: 1;
    display: flex;
    min-height: 0;
}

.sidebar {
    width: 107px;
    background: #e2e6ef;
    border-right: 1px solid #7c7f8c;
}

.panel-tabs {
    display: flex;
    gap: 4px;
    height: 6px;
    padding-left: 2px;
    overflow: hidden;
    background: #cdd0dc;
    align-items: flex-end;
}

.panel-tabs svg {
    width: 11px;
    height: 10px;
}

.filter {
    display: flex;
    align-items: center;
    height: 8px;
    margin: 0 1px;
    padding-left: 2px;
    background: #fafbff;
    border: 1px solid #8f9cc0;
    border-radius: 4px;
}

.filter svg {
    width: 6px;
    height: 6px;
}

.filter input {
    flex: 1;
    min-width: 0;
    height: 6px;
    padding: 0 2px;
    border: 0;
    outline: none;
    font-size: 5px;
    background: transparent;
}

.tree {
    display: grid;
    grid-template-rows: repeat(20, 1fr);
    height: 196px;
    margin: 0;
    padding: 2px 0 0;
    list-style: none;
    border-bottom: 2px solid #5e8cc0;
}

.tree li {
    display: flex;
    align-items: center;
    position: relative;
    padding-left: 11px;
    white-space: nowrap;
}

.tree li::before {
    content: "";
    position: absolute;
    left: 5px;
    top: 0;
    bottom: 0;
    border-left: 1px solid #c3c6d0;
}

.tree li svg {
    flex: none;
    width: 9px;
    height: 9px;
    margin-right: 1px;
}

.tree .root {
    padding-left: 1px;
}

.tree .root::before {
    display: none;
}

.tree .child {
    padding-left: 21px;
}

.tree .off {
    color: #9a9ca6;
}

.selected {
    color: #fff;
    background: #14317c;
    line-height: 8px;
}

.exp {
    position: absolute;
    left: 2px;
    top: 2px;
    width: 6px;
    height: 6px;
    font-size: 6px;
    line-height: 4px;
    color: #333;
    background: #eef0f6;
    border: 1px solid #b0b3be;
}

/* Viewport */
.viewport {
    flex: 1;
    position: relative;
    min-width: 0;
    background: #c5c8d4;
}

.model {
    width: 100%;
    height: 100%;
}

.axis {
    font: 6px "Liberation Sans", sans-serif;
}

.axis-x {
    fill: #d03030;
}

.axis-y {
    fill: #1f8a30;
}

.axis-z {
    fill: #2a2ab4;
}

.view-name {
    position: absolute;
    left: 7px;
    bottom: 0;
    font: bold 6px/8px "DejaVu Sans", sans-serif;
    color: #252658;
}

.splitter {
    position: absolute;
    left: 0;
    top: 48%;
    width: 5px;
    height: 15px;
    background: #eceef5;
    border: 1px solid #7c7f8c;
    border-left: 0;
}

.hud {
    position: absolute;
    top: -8px;
    left: 0;
    right: 0;
    justify-content: center;
}

.hud .dd {
    width: 6px;
}

.doc-buttons {
    position: absolute;
    top: -7px;
    right: 2px;
}

.task-pane {
    position: absolute;
    right: 0;
    top: 22px;
    display: flex;
    flex-direction: column;
}

.task-pane button {
    width: 12px;
    height: 13px;
    background: #d0d2dc;
    border: 1px solid #9a9dac;
    border-right: 0;
}

.task-pane .active {
    background: #f7f8fc;
}

.task-pane svg {
    width: 10px;
    height: 10px;
}

/* Bottom tabs */
.bottom-tabs {
    display: flex;
    height: 9px;
    background: #eceef5;
    border-top: 1px solid #777a88;
}

.scrollers {
    display: flex;
    width: 37px;
    padding-left: 1px;
    background: #b9bcc9;
}

.scrollers button {
    width: 9px;
    line-height: 6px;
    color: #777a8a;
    border: 1px solid #9396a5;
}

.sheet {
    padding: 0 4px;
    font: 7px/7px Roboto, sans-serif;
    background: #b5b8c6;
    border-right: 1px solid #555866;
    border-bottom: 1px solid #555866;
}

.sheet.active {
    font-weight: bold;
    background: #f0f1f7;
}

/* Status bar */
.status {
    display: flex;
    align-items: center;
    height: 9px;
    background: #dad9d6;
}

.status-text {
    flex: 1;
    padding-left: 1px;
}

.ticks {
    display: flex;
    gap: 3px;
}

.ticks i {
    width: 2px;
    height: 8px;
    border-left: 1px solid #aaaaae;
    border-right: 1px solid #f2f2f0;
}

.ticks.last {
    margin-left: 12px;
}

.mode {
    padding: 0 3px;
}

.tag {
    width: 9px;
    height: 9px;
    margin: 0 7px 0 3px;
}
```
